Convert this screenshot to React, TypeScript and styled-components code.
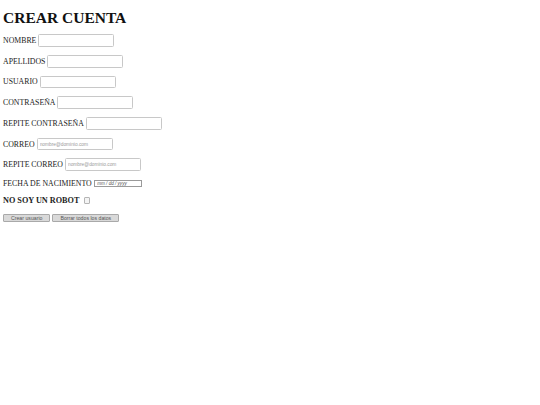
import styled, { createGlobalStyle } from "styled-components";

const GlobalStyle = createGlobalStyle`
  html, body {
    margin: 0;
    padding: 0;
    background: #ffffff;
  }
  body {
    font-family: "Liberation Serif", "Times New Roman", serif;
    color: #111;
  }
`;

const Page = styled.div`
  padding: 0 3px;
`;

const Title = styled.h1`
  font-size: 15.5px;
  font-weight: bold;
  line-height: 18px;
  margin: 8.5px 0 7.8px;
  color: #111;
`;

const Form = styled.form`
  display: flex;
  flex-direction: column;
  align-items: flex-start;
  gap: 8.1px;
`;

const Row = styled.div<{ $h: number }>`
  display: flex;
  align-items: center;
  gap: 2px;
  height: ${(p) => p.$h}px;
`;

const Label = styled.label<{ $bold?: boolean }>`
  font-size: ${(p) => (p.$bold ? "8.2px" : "7.8px")};
  font-weight: ${(p) => (p.$bold ? "bold" : "normal")};
  white-space: nowrap;
  color: #222;
`;

const TextInput = styled.input`
  box-sizing: border-box;
  width: 76px;
  height: 12.6px;
  padding: 0 2px;
  border: 1px solid #c8c8c8;
  border-radius: 1.5px;
  background: #fff;
  font-family: "Liberation Sans", Arial, sans-serif;
  font-size: 4.8px;
  outline: none;

  &::placeholder {
    color: #9a9a9a;
  }
`;

const DateInput = styled.input`
  box-sizing: border-box;
  width: 48px;
  height: 7.6px;
  margin-left: 0.5px;
  padding: 0 2px;
  border: 1px solid #9a9a9a;
  border-radius: 0;
  background: #fff;
  font-family: "Liberation Sans", Arial, sans-serif;
  font-size: 4.6px;
  font-style: italic;
  outline: none;

  &::placeholder {
    color: #555;
  }
`;

const Check = styled.input`
  box-sizing: border-box;
  appearance: none;
  width: 6.5px;
  height: 6.5px;
  margin: 0 0 0 2.5px;
  border: 1px solid #b5b5b5;
  border-radius: 1px;
  background: #f4f4f4;
`;

const Buttons = styled.div`
  display: flex;
  gap: 2px;
  height: 8px;
  margin-top: 0.5px;
`;

const Button = styled.button`
  box-sizing: border-box;
  height: 8px;
  padding: 0 7px;
  border: 1px solid #a9a9a9;
  border-radius: 1px;
  background: #d9d9d9;
  color: #555;
  font-family: "Liberation Sans", Arial, sans-serif;
  font-size: 5.2px;
  line-height: 6px;
`;

const fields = [
  { label: "NOMBRE", type: "text" },
  { label: "APELLIDOS", type: "text" },
  { label: "USUARIO", type: "text" },
  { label: "CONTRASEÑA", type: "password" },
  { label: "REPITE CONTRASEÑA", type: "password" },
  { label: "CORREO", type: "email", placeholder: "nombre@dominio.com" },
  { label: "REPITE CORREO", type: "email", placeholder: "nombre@dominio.com" },
];

const App = () => {
  return (
    <>
      <GlobalStyle />
      <Page>
        <Title>CREAR CUENTA</Title>
        <Form onSubmit={(e) => e.preventDefault()}>
          {fields.map((f) => (
            <Row $h={12.6} key={f.label}>
              <Label>{f.label}</Label>
              <TextInput type={f.type} placeholder={f.placeholder} />
            </Row>
          ))}
          <Row $h={9}>
            <Label>FECHA DE NACIMIENTO</Label>
            <DateInput type="text" placeholder="mm / dd / yyyy" readOnly />
          </Row>
          <Row $h={9}>
            <Label $bold>NO SOY UN ROBOT</Label>
            <Check type="checkbox" />
          </Row>
          <Buttons>
            <Button type="submit">Crear usuario</Button>
            <Button type="reset">Borrar todos los datos</Button>
          </Buttons>
        </Form>
      </Page>
    </>
  );
};

export default App;
